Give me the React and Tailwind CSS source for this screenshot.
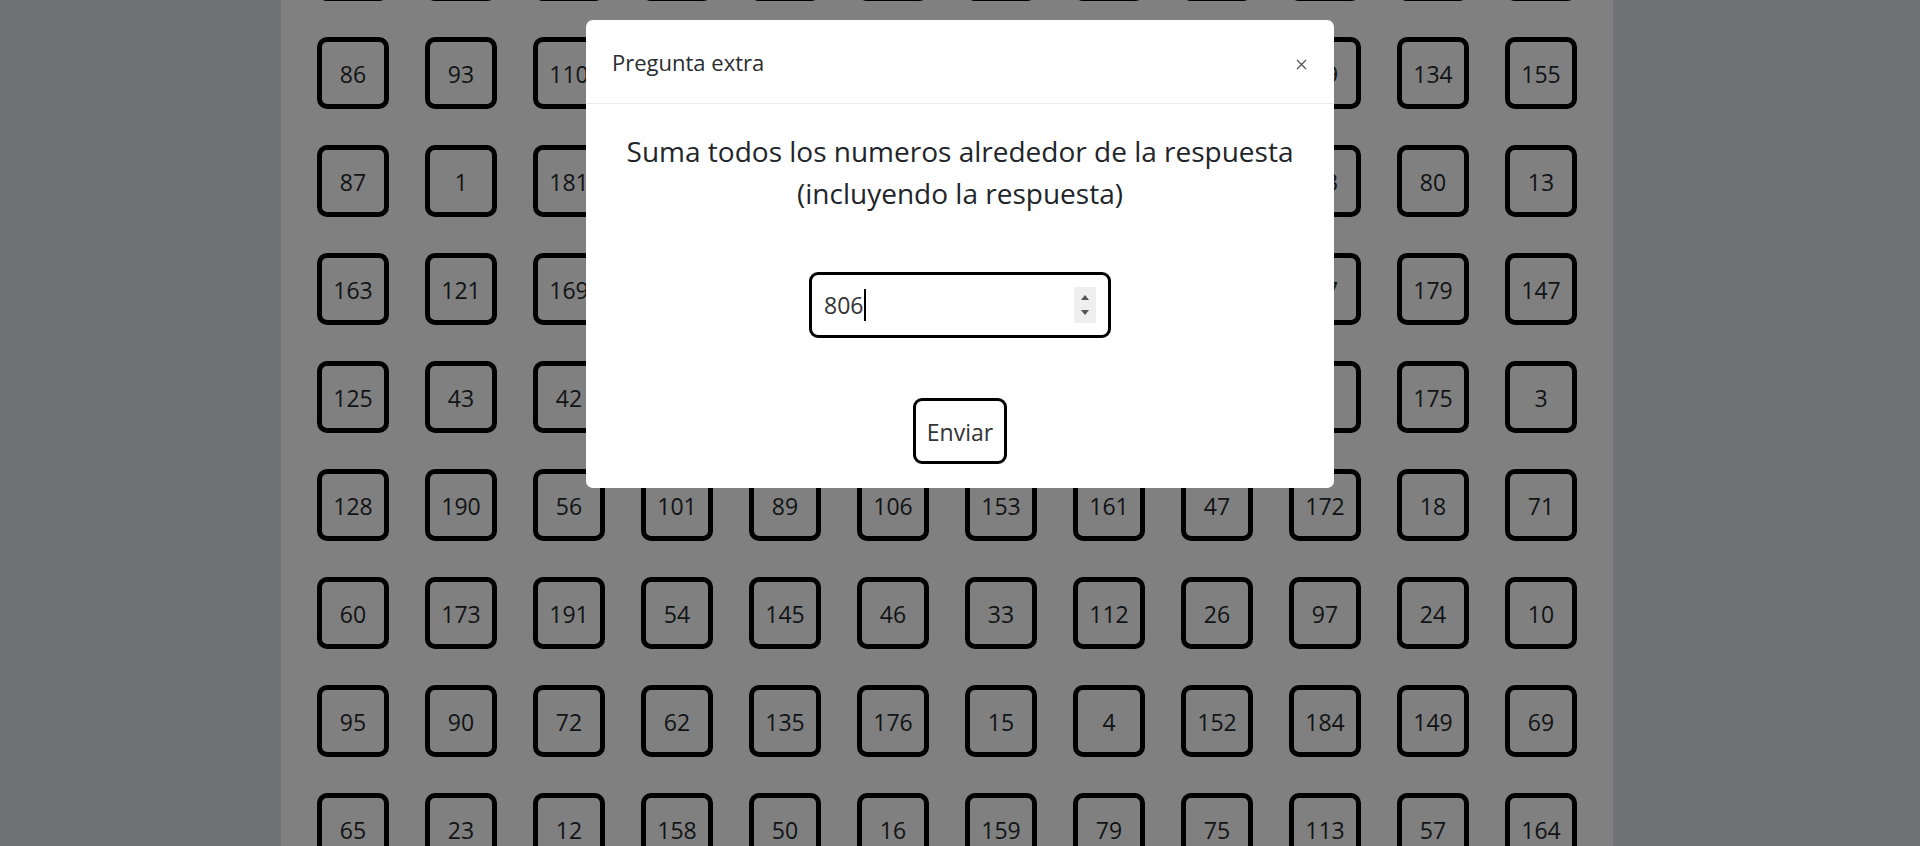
import React from "react";

const H = null;
const rows = [
  [H, H, H, H, H, H, H, H, H, H, H, H],
  [86, 93, 110, H, H, H, H, H, H, 39, 134, 155],
  [87, 1, 181, H, H, H, H, H, H, 83, 80, 13],
  [163, 121, 169, H, H, H, H, H, H, 27, 179, 147],
  [125, 43, 42, H, H, H, H, H, H, 8, 175, 3],
  [128, 190, 56, 101, 89, 106, 153, 161, 47, 172, 18, 71],
  [60, 173, 191, 54, 145, 46, 33, 112, 26, 97, 24, 10],
  [95, 90, 72, 62, 135, 176, 15, 4, 152, 184, 149, 69],
  [65, 23, 12, 158, 50, 16, 159, 79, 75, 113, 57, 164],
];

function Cell({ n }) {
  return (
    <div className="w-[72px] h-[72px] border-[5px] border-black rounded-[10px] flex items-center justify-center text-[23px] text-[#111315] leading-none pt-[2px]">
      {n}
    </div>
  );
}

export default function App() {
  return (
    <div className="relative h-[846px] w-[1920px] overflow-hidden bg-[#717275] font-['Open_Sans',sans-serif]">
      <div className="flex h-full">
        <div className="w-[281px] shrink-0" />
        <div className="w-[1332px] shrink-0 bg-[#808080] h-full overflow-hidden">
          <div className="-mt-[71px] px-[36px] grid grid-cols-[repeat(12,72px)] gap-[36px]">
            {rows.flat().map((n, i) => (
              <Cell key={i} n={n} />
            ))}
          </div>
        </div>
        <div className="flex-1" />
      </div>

      <div className="absolute top-[20px] left-[586px] w-[748px] bg-white rounded-[7px] text-[#212529]">
        <div className="h-[84px] border-b border-[#e9ecef] flex items-center justify-between pl-[26px] pr-[27px]">
          <div className="text-[22px] leading-[30px] text-[#2a2d30]">Pregunta extra</div>
          <svg width="11" height="11" viewBox="0 0 11 11" className="mt-[6px]">
            <path d="M1 1 L10 10 M10 1 L1 10" stroke="#555" strokeWidth="1.3" fill="none" />
          </svg>
        </div>
        <div className="flex flex-col items-center pt-[26px] pb-[24px]">
          <div className="text-[28px] leading-[42px] text-center">
            Suma todos los numeros alrededor de la respuesta
            <br />
            (incluyendo la respuesta)
          </div>
          <div className="mt-[58px] w-[302px] h-[66px] border-[3px] border-black rounded-[9px] flex items-center pl-[12px] pr-[12px]">
            <span className="text-[23px] leading-none text-[#333]">806</span>
            <span className="w-[1.5px] h-[32px] bg-black ml-[1px]" />
            <div className="ml-auto w-[22px] h-[36px] bg-[#efefef] flex flex-col items-center justify-center gap-[10px]">
              <svg width="8" height="5" viewBox="0 0 8 5">
                <path d="M0 5 L4 0 L8 5 Z" fill="#555" />
              </svg>
              <svg width="8" height="5" viewBox="0 0 8 5">
                <path d="M0 0 L8 0 L4 5 Z" fill="#555" />
              </svg>
            </div>
          </div>
          <div className="mt-[60px] w-[94px] h-[66px] border-[3px] border-black rounded-[9px] flex items-center justify-center text-[23px] leading-none text-[#333] pt-[3px]">
            Enviar
          </div>
        </div>
      </div>
    </div>
  );
}
